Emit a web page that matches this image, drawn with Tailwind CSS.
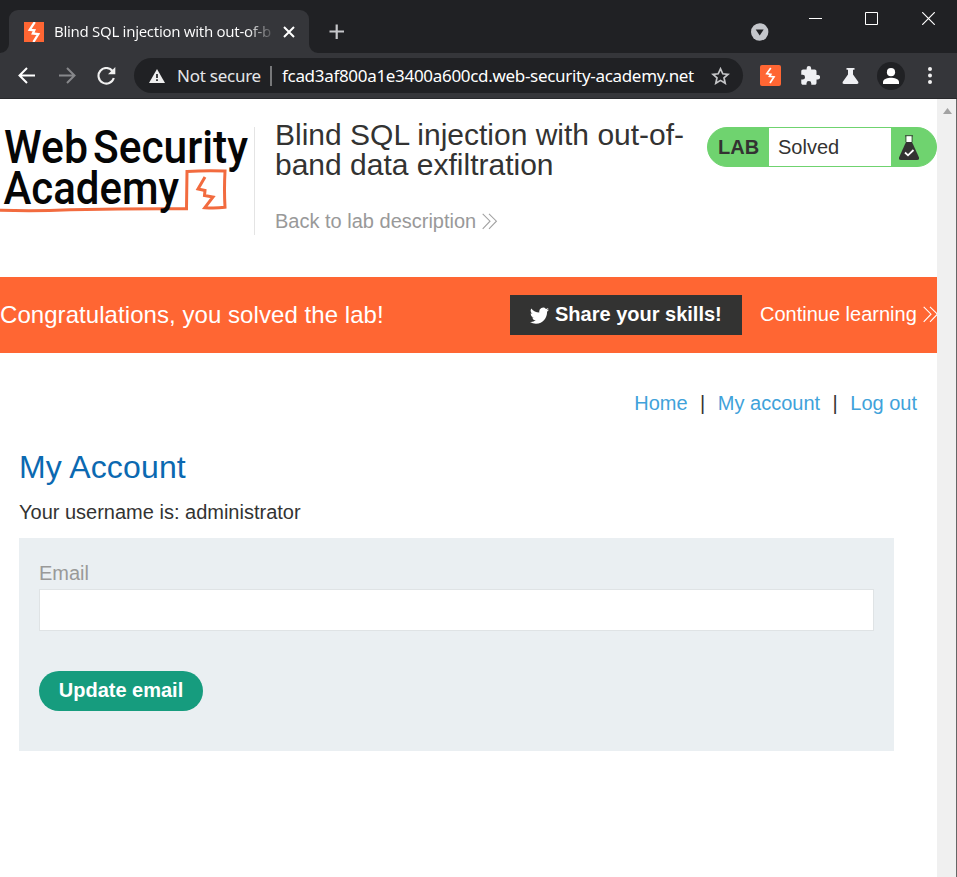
<!DOCTYPE html>
<html lang="en">
<head>
<meta charset="utf-8">
<title>Blind SQL injection with out-of-band data exfiltration</title>
<script src="https://cdn.jsdelivr.net/npm/@tailwindcss/browser@4"></script>
</head>
<body class="h-[877px] w-[957px] overflow-hidden bg-white font-['Liberation_Sans',Arial,sans-serif] text-[#333332]">
<div class="flex h-[877px] w-[957px] flex-col">
  <!-- Tab strip -->
  <div class="flex h-[53px] shrink-0 bg-[#202124]">
    <div class="relative ml-[9px] mt-[10px] flex h-[43px] w-[300px] items-center rounded-t-[9px] bg-[#35363a] pl-[15px]">
      <svg class="absolute -left-[9px] bottom-0 h-[9px] w-[9px]" viewBox="0 0 9 9"><path d="M9 0V9H0A9 9 0 0 0 9 0Z" fill="#35363a"/></svg>
      <svg class="absolute -right-[9px] bottom-0 h-[9px] w-[9px]" viewBox="0 0 9 9"><path d="M0 0V9H9A9 9 0 0 1 0 0Z" fill="#35363a"/></svg>
      <svg class="h-5 w-5 shrink-0" viewBox="0 0 20 20"><path d="M0 0H20V20H0Z" fill="#ff6633"/><path d="M10.8 0L5.7 7.8L10.300 8.300L8.800 11.500L14.300 12.200L9.400 20" fill="none" stroke="#fff" stroke-width="2.3"/></svg>
      <div class="ml-[10px] w-[219px] overflow-hidden whitespace-nowrap bg-linear-to-r from-white from-88% to-white/10 bg-clip-text font-['Noto_Sans',sans-serif] text-[15px] tracking-[-0.3px] text-transparent">Blind SQL injection with out-of-b</div>
      <svg class="ml-[10px] h-3 w-3 shrink-0" viewBox="0 0 12 12" stroke="#fff" stroke-width="2"><path d="M1 1L11 11M11 1L1 11"/></svg>
    </div>
    <svg class="ml-[20px] mt-[24px] h-4 w-4" viewBox="0 0 16 16" stroke="#c6c7ca" stroke-width="2.2"><path d="M0.5 7.5H15M7.7 0.5V15"/></svg>
    <div class="flex flex-1 justify-end">
      <svg class="mr-[40px] mt-[23px] h-[18px] w-[18px]" viewBox="0 0 18 18"><circle cx="8.7" cy="9" r="8.7" fill="#c4c6cb"/><path d="M4.700 6.4H12.700L8.700 12.5Z" fill="#202124"/></svg>
      <svg class="mr-[43px] mt-[12px] h-[13px] w-[13px]" viewBox="0 0 13 13"><path d="M0 6.5H13" stroke="#fff"/></svg>
      <svg class="mr-[44px] mt-[12px] h-[13px] w-[13px]" viewBox="0 0 13 13" fill="none"><path d="M.5 .5H12.5V12.5H.5Z" stroke="#fff"/></svg>
      <svg class="mr-[22px] mt-[12px] h-[13px] w-[13px]" viewBox="0 0 13 13"><path d="M.2 .2L12.8 12.8M12.8 .2L.2 12.8" stroke="#fff" stroke-width="1.2"/></svg>
    </div>
  </div>
  <!-- Toolbar -->
  <div class="flex h-[46px] shrink-0 items-center border-b border-[#28292c] bg-[#35363a] font-['Noto_Sans',sans-serif]">
    <svg class="ml-[18px] h-[17px] w-[17px]" viewBox="0 0 17 17" fill="none" stroke="#fff" stroke-width="2"><path d="M17 8.5H2M9 1L1.5 8.5L9 16"/></svg>
    <svg class="ml-[24px] h-[17px] w-[17px]" viewBox="0 0 17 17" fill="none" stroke="#87888b" stroke-width="2"><path d="M0 8.5H15M8 1L15.5 8.5L8 16"/></svg>
    <svg class="ml-[21px] h-[18px] w-[19px]" viewBox="0 0 19 18" fill="none"><path d="M15.5 4A7.8 7.8 0 1 0 16.8 11" stroke="#f0f0f0" stroke-width="2.1"/><path d="M18.3 0V7.3H11Z" fill="#f0f0f0"/></svg>
    <div class="ml-[18px] flex h-[35px] w-[609px] items-center rounded-full bg-[#202124]">
      <svg class="ml-[15px] h-[14px] w-4" viewBox="0 0 16 14"><path d="M8 0L16 14H0Z" fill="#eee"/><path d="M8 5V9M8 10.3V12" stroke="#202124" stroke-width="1.7"/></svg>
      <span class="ml-[12px] w-[84px] whitespace-nowrap text-[17px] tracking-[-0.25px] text-[#e5e6e8]">Not secure</span>
      <span class="ml-[9px] h-5 w-[2px] bg-[#77787a]"></span>
      <span class="ml-[10px] w-[412px] whitespace-nowrap text-[17px] tracking-[-0.31px] text-white">fcad3af800a1e3400a600cd.web-security-academy.net</span>
      <svg class="ml-[17px] h-[18px] w-[19px]" viewBox="0 0 19 18" fill="none"><path d="M9.5 1.8L11.8 6.8L17 7.3L13 10.8L14.2 16.3L9.5 13.4L4.8 16.3L6 10.8L2 7.3L7.2 6.8Z" stroke="#c5c6c8" stroke-width="1.7"/></svg>
    </div>
    <svg class="ml-[17px] h-[21px] w-[21px]" viewBox="0 0 21 21"><rect width="21" height="21" rx="2" fill="#ff6633"/><path d="M10.8 3L6.800 8.600L10.800 9.300L9.500 11.300L14 11.900L10 18" fill="none" stroke="#fff" stroke-width="1.7"/></svg>
    <svg class="ml-[20px] h-[19px] w-[19px]" viewBox="1.8 1 21 21.2"><path d="M20.5 11H19V7c0-1.1-.9-2-2-2h-4V3.500a2.500 2.500 0 0 0-5 0V5H4c-1.100 0-2 .9-2 2v3.800h1.500a2.700 2.700 0 0 1 0 5.400H2V20c0 1.100.9 2 2 2h3.800v-1.500a2.700 2.700 0 0 1 5.400 0V22H17c1.100 0 2-.9 2-2v-4h1.500a2.500 2.500 0 0 0 0-5z" fill="#eff0f3"/></svg>
    <svg class="ml-[22px] h-4 w-[17px]" viewBox="0 0 17 16"><path d="M4.5 0H12.5V1.8H11V6.5L16.4 14Q16.8 16 15 16H2Q0 16 .6 14L6 6.500V1.8H4.5Z" fill="#eff0f3"/></svg>
    <svg class="ml-[18px] h-7 w-7" viewBox="0 0 28 28"><circle cx="14" cy="14" r="14" fill="#202124"/><circle cx="14" cy="10.2" r="4.1" fill="#fff"/><path d="M6 22V20C6 17 11 15.8 14 15.8S22 17 22 20V22Z" fill="#fff"/></svg>
    <svg class="ml-[23px] h-[17px] w-1" viewBox="0 0 4 17" fill="#f1f1f1"><circle cx="2" cy="2" r="2"/><circle cx="2" cy="8.5" r="2"/><circle cx="2" cy="15" r="2"/></svg>
  </div>
  <!-- Viewport -->
  <div class="flex min-h-0 flex-1">
    <main class="w-[937px] overflow-hidden">
      <header class="flex h-[178px] items-start">
        <svg class="mt-[21px] h-[100px] w-[254px] shrink-0" viewBox="0 0 254 100" font-family="Roboto, sans-serif" font-size="47" font-weight="500">
          <path d="M0 90.3Q35 91.5 70 89.8Q130 88.5 186.5 88.8L187 51.5Q205 50.3 225 51Q224 70 225 87.3Q215 88.600 204.800 87.700L213 77L204.500 75.500L205 70.500L198 69L205 57" fill="none" stroke="#f26b3f" stroke-width="3"/>
          <g fill="#060606">
            <text x="4" y="43" textLength="84" lengthAdjust="spacingAndGlyphs">Web</text>
            <text x="93" y="43" textLength="155" lengthAdjust="spacingAndGlyphs">Security</text>
            <text x="3.5" y="83.5" textLength="175.5" lengthAdjust="spacingAndGlyphs">Academy</text>
          </g>
        </svg>
        <div class="mt-[28px] h-[108px] w-px shrink-0 bg-[#e4e4e4]"></div>
        <div class="ml-[20px] mt-[21px] w-[432px] shrink-0 whitespace-nowrap">
          <h2 class="text-[30px] leading-[30px]">Blind SQL injection with out-of-<br>band data exfiltration</h2>
          <a class="mt-[30px] flex items-center text-[20px] leading-[22px] text-[#999]"><span>Back to lab description</span>
            <svg class="ml-[6px] h-[17px] w-[16px]" viewBox="0 0 16 17" fill="none" stroke="#a2a2a2" stroke-width="1.1"><path d="M.7 .8L8 8.2L.7 15.8M7 .8L14.4 8.2L7 15.8"/></svg>
          </a>
        </div>
        <div class="mt-[28px] flex h-10 w-[230px] shrink-0 overflow-hidden rounded-full border border-[#6fd36f] bg-[#6fd36f] text-[20px] leading-[39px]">
          <span class="w-[61px] pl-[10px] font-bold">LAB</span>
          <span class="w-[122px] bg-white pl-[9px]">Solved</span>
          <svg class="ml-[8px] mt-[7px] h-[25px] w-5" viewBox="0 0 20 25"><path d="M6 .8H14M7 1V7M13 1V7" stroke="#333" stroke-width="1"/><path d="M7.5 1.3H12.5V7H7.5Z" fill="#fff"/><path d="M7 7H13L20 22.5Q20.5 25 18 25H2Q-.5 25 0 22.5Z" fill="#333332"/><path d="M6 17.5L9 20.3L14.5 15" stroke="#fff" stroke-width="1.8" fill="none"/></svg>
        </div>
      </header>
      <!-- Solved banner -->
      <section class="flex h-[76px] items-center whitespace-nowrap bg-[#ff6633] text-white">
        <span class="w-[510px] shrink-0 text-[24px] tracking-[0.06px]">Congratulations, you solved the lab!</span>
        <button class="flex h-10 w-[232px] shrink-0 items-center bg-[#333332] pl-[20px] text-[20px] font-bold">
          <svg class="h-[17px] w-[19px]" viewBox="0 1.5 24 20.5" preserveAspectRatio="none" fill="#fff"><path d="M23.95 4.57a10 10 0 0 1-2.82.77 4.96 4.96 0 0 0 2.16-2.72c-.95.55-2 .95-3.13 1.18a4.92 4.92 0 0 0-8.38 4.48C7.69 8.1 4.07 6.13 1.64 3.16a4.92 4.92 0 0 0 1.52 6.57 4.9 4.9 0 0 1-2.23-.61v.06a4.92 4.92 0 0 0 3.95 4.83 5 5 0 0 1-2.21.08 4.94 4.94 0 0 0 4.6 3.42A9.87 9.87 0 0 1 0 19.54a13.99 13.99 0 0 0 7.55 2.21c9.05 0 14-7.5 14-13.98 0-.21 0-.42-.02-.63a9.94 9.94 0 0 0 2.46-2.55z"/></svg>
          <span class="ml-[6px] pb-[2px]">Share your skills!</span>
        </button>
        <a class="ml-[18px] flex shrink-0 items-center text-[20px]"><span class="w-[157px] pb-[2px]">Continue learning</span>
          <svg class="mb-[2px] ml-[6px] h-[17px] w-[16px]" viewBox="0 0 16 17" fill="none" stroke="#fff" stroke-width="1.1"><path d="M.7 .8L8 8.2L.7 15.8M7 .8L14.4 8.2L7 15.8"/></svg>
        </a>
      </section>
      <nav class="flex h-[100px] items-center justify-end whitespace-nowrap pr-5 text-[20px]">
        <a class="text-[#3fa2da]">Home</a><span class="mx-[12.5px]">|</span><a class="text-[#3fa2da]">My account</a><span class="mx-[12.5px]">|</span><a class="text-[#3fa2da]">Log out</a>
      </nav>
      <h1 class="ml-[19px] h-[47px] text-[32px] leading-[29px] tracking-[0.15px] text-[#0b69b1]">My Account</h1>
      <p class="ml-[19px] h-[38px] text-[20px] leading-[24px]">Your username is: administrator</p>
      <form class="ml-[19px] h-[213px] w-[875px] bg-[#eaeff2] px-5 pt-[24px] text-[20px]">
        <label class="block h-[27px] leading-[22px] text-[#999]">Email</label>
        <input class="block h-[42px] w-full border border-[#dfe3e5] bg-white">
        <button type="button" class="mt-10 h-10 w-[164px] rounded-full bg-[#169c7e] font-bold leading-[38px] text-white"><span class="-mt-[2px] block">Update email</span></button>
      </form>
    </main>
    <div class="flex w-[19px] justify-center bg-[#f0f0f0] pt-[9px]"><svg class="ml-[2px] h-[6px] w-[9px]" viewBox="0 0 9 6"><path d="M0 6L4.5 0L9 6Z" fill="#a2a2a2"/></svg></div>
    <div class="w-px bg-[#666]"></div>
  </div>
</div>
</body>
</html>
